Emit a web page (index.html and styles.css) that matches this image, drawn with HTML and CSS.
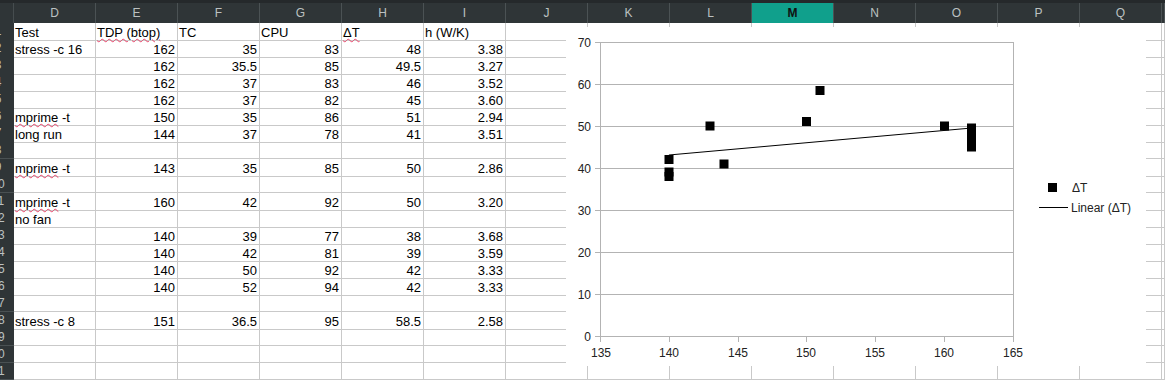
FILE: index.html
```html
<!DOCTYPE html>
<html>
<head>
<meta charset="utf-8">
<link rel="stylesheet" href="styles.css">
</head>
<body>
<div class="sheet">
  <div class="row hdr">
    <div class="corner"></div>
    <div class="h">D</div><div class="h">E</div><div class="h">F</div><div class="h">G</div><div class="h">H</div><div class="h">I</div><div class="h">J</div><div class="h">K</div><div class="h">L</div><div class="h sel">M</div><div class="h">N</div><div class="h">O</div><div class="h">P</div><div class="h">Q</div><div class="h"></div>
  </div>
  <div class="row"><div class="rh"><span>1</span></div><div class="c">Test</div><div class="c"><span class="sp">TDP (btop)</span></div><div class="c">TC</div><div class="c">CPU</div><div class="c"><span class="sp">ΔT</span></div><div class="c">h (W/K)</div><div class="c"></div><div class="c"></div><div class="c"></div><div class="c"></div><div class="c"></div><div class="c"></div><div class="c"></div><div class="c"></div><div class="c"></div></div>
  <div class="row"><div class="rh"><span>2</span></div><div class="c">stress -c 16</div><div class="c n">162</div><div class="c n">35</div><div class="c n">83</div><div class="c n">48</div><div class="c n">3.38</div><div class="c"></div><div class="c"></div><div class="c"></div><div class="c"></div><div class="c"></div><div class="c"></div><div class="c"></div><div class="c"></div><div class="c"></div></div>
  <div class="row"><div class="rh"><span>3</span></div><div class="c"></div><div class="c n">162</div><div class="c n">35.5</div><div class="c n">85</div><div class="c n">49.5</div><div class="c n">3.27</div><div class="c"></div><div class="c"></div><div class="c"></div><div class="c"></div><div class="c"></div><div class="c"></div><div class="c"></div><div class="c"></div><div class="c"></div></div>
  <div class="row"><div class="rh"><span>4</span></div><div class="c"></div><div class="c n">162</div><div class="c n">37</div><div class="c n">83</div><div class="c n">46</div><div class="c n">3.52</div><div class="c"></div><div class="c"></div><div class="c"></div><div class="c"></div><div class="c"></div><div class="c"></div><div class="c"></div><div class="c"></div><div class="c"></div></div>
  <div class="row"><div class="rh"><span>5</span></div><div class="c"></div><div class="c n">162</div><div class="c n">37</div><div class="c n">82</div><div class="c n">45</div><div class="c n">3.60</div><div class="c"></div><div class="c"></div><div class="c"></div><div class="c"></div><div class="c"></div><div class="c"></div><div class="c"></div><div class="c"></div><div class="c"></div></div>
  <div class="row"><div class="rh"><span>6</span></div><div class="c"><span class="sp">mprime</span> -t</div><div class="c n">150</div><div class="c n">35</div><div class="c n">86</div><div class="c n">51</div><div class="c n">2.94</div><div class="c"></div><div class="c"></div><div class="c"></div><div class="c"></div><div class="c"></div><div class="c"></div><div class="c"></div><div class="c"></div><div class="c"></div></div>
  <div class="row"><div class="rh"><span>7</span></div><div class="c">long run</div><div class="c n">144</div><div class="c n">37</div><div class="c n">78</div><div class="c n">41</div><div class="c n">3.51</div><div class="c"></div><div class="c"></div><div class="c"></div><div class="c"></div><div class="c"></div><div class="c"></div><div class="c"></div><div class="c"></div><div class="c"></div></div>
  <div class="row"><div class="rh"><span>8</span></div><div class="c"></div><div class="c"></div><div class="c"></div><div class="c"></div><div class="c"></div><div class="c"></div><div class="c"></div><div class="c"></div><div class="c"></div><div class="c"></div><div class="c"></div><div class="c"></div><div class="c"></div><div class="c"></div><div class="c"></div></div>
  <div class="row"><div class="rh"><span>9</span></div><div class="c"><span class="sp">mprime</span> -t</div><div class="c n">143</div><div class="c n">35</div><div class="c n">85</div><div class="c n">50</div><div class="c n">2.86</div><div class="c"></div><div class="c"></div><div class="c"></div><div class="c"></div><div class="c"></div><div class="c"></div><div class="c"></div><div class="c"></div><div class="c"></div></div>
  <div class="row"><div class="rh"><span>10</span></div><div class="c"></div><div class="c"></div><div class="c"></div><div class="c"></div><div class="c"></div><div class="c"></div><div class="c"></div><div class="c"></div><div class="c"></div><div class="c"></div><div class="c"></div><div class="c"></div><div class="c"></div><div class="c"></div><div class="c"></div></div>
  <div class="row"><div class="rh"><span>11</span></div><div class="c"><span class="sp">mprime</span> -t</div><div class="c n">160</div><div class="c n">42</div><div class="c n">92</div><div class="c n">50</div><div class="c n">3.20</div><div class="c"></div><div class="c"></div><div class="c"></div><div class="c"></div><div class="c"></div><div class="c"></div><div class="c"></div><div class="c"></div><div class="c"></div></div>
  <div class="row"><div class="rh"><span>12</span></div><div class="c">no fan</div><div class="c"></div><div class="c"></div><div class="c"></div><div class="c"></div><div class="c"></div><div class="c"></div><div class="c"></div><div class="c"></div><div class="c"></div><div class="c"></div><div class="c"></div><div class="c"></div><div class="c"></div><div class="c"></div></div>
  <div class="row"><div class="rh"><span>13</span></div><div class="c"></div><div class="c n">140</div><div class="c n">39</div><div class="c n">77</div><div class="c n">38</div><div class="c n">3.68</div><div class="c"></div><div class="c"></div><div class="c"></div><div class="c"></div><div class="c"></div><div class="c"></div><div class="c"></div><div class="c"></div><div class="c"></div></div>
  <div class="row"><div class="rh"><span>14</span></div><div class="c"></div><div class="c n">140</div><div class="c n">42</div><div class="c n">81</div><div class="c n">39</div><div class="c n">3.59</div><div class="c"></div><div class="c"></div><div class="c"></div><div class="c"></div><div class="c"></div><div class="c"></div><div class="c"></div><div class="c"></div><div class="c"></div></div>
  <div class="row"><div class="rh"><span>15</span></div><div class="c"></div><div class="c n">140</div><div class="c n">50</div><div class="c n">92</div><div class="c n">42</div><div class="c n">3.33</div><div class="c"></div><div class="c"></div><div class="c"></div><div class="c"></div><div class="c"></div><div class="c"></div><div class="c"></div><div class="c"></div><div class="c"></div></div>
  <div class="row"><div class="rh"><span>16</span></div><div class="c"></div><div class="c n">140</div><div class="c n">52</div><div class="c n">94</div><div class="c n">42</div><div class="c n">3.33</div><div class="c"></div><div class="c"></div><div class="c"></div><div class="c"></div><div class="c"></div><div class="c"></div><div class="c"></div><div class="c"></div><div class="c"></div></div>
  <div class="row"><div class="rh"><span>17</span></div><div class="c"></div><div class="c"></div><div class="c"></div><div class="c"></div><div class="c"></div><div class="c"></div><div class="c"></div><div class="c"></div><div class="c"></div><div class="c"></div><div class="c"></div><div class="c"></div><div class="c"></div><div class="c"></div><div class="c"></div></div>
  <div class="row"><div class="rh"><span>18</span></div><div class="c">stress -c 8</div><div class="c n">151</div><div class="c n">36.5</div><div class="c n">95</div><div class="c n">58.5</div><div class="c n">2.58</div><div class="c"></div><div class="c"></div><div class="c"></div><div class="c"></div><div class="c"></div><div class="c"></div><div class="c"></div><div class="c"></div><div class="c"></div></div>
  <div class="row"><div class="rh"><span>19</span></div><div class="c"></div><div class="c"></div><div class="c"></div><div class="c"></div><div class="c"></div><div class="c"></div><div class="c"></div><div class="c"></div><div class="c"></div><div class="c"></div><div class="c"></div><div class="c"></div><div class="c"></div><div class="c"></div><div class="c"></div></div>
  <div class="row"><div class="rh"><span>20</span></div><div class="c"></div><div class="c"></div><div class="c"></div><div class="c"></div><div class="c"></div><div class="c"></div><div class="c"></div><div class="c"></div><div class="c"></div><div class="c"></div><div class="c"></div><div class="c"></div><div class="c"></div><div class="c"></div><div class="c"></div></div>
  <div class="row"><div class="rh"><span>21</span></div><div class="c"></div><div class="c"></div><div class="c"></div><div class="c"></div><div class="c"></div><div class="c"></div><div class="c"></div><div class="c"></div><div class="c"></div><div class="c"></div><div class="c"></div><div class="c"></div><div class="c"></div><div class="c"></div><div class="c"></div></div>

  <div class="chart">
    <svg width="580" height="339" viewBox="0 0 580 339">
      <g transform="translate(-566 -27)">
        <g class="grid">
          <line x1="600" y1="42.5" x2="1013" y2="42.5"/>
          <line x1="600" y1="84.5" x2="1013" y2="84.5"/>
          <line x1="600" y1="126.5" x2="1013" y2="126.5"/>
          <line x1="600" y1="168.5" x2="1013" y2="168.5"/>
          <line x1="600" y1="210.5" x2="1013" y2="210.5"/>
          <line x1="600" y1="252.5" x2="1013" y2="252.5"/>
          <line x1="600" y1="294.5" x2="1013" y2="294.5"/>
          <line x1="595" y1="336.5" x2="1013.5" y2="336.5"/>
          <line x1="1013.5" y1="42" x2="1013.5" y2="342"/>
          <line x1="600.5" y1="42" x2="600.5" y2="342"/>
          <line x1="595" y1="42.5" x2="600" y2="42.5"/>
          <line x1="595" y1="84.5" x2="600" y2="84.5"/>
          <line x1="595" y1="126.5" x2="600" y2="126.5"/>
          <line x1="595" y1="168.5" x2="600" y2="168.5"/>
          <line x1="595" y1="210.5" x2="600" y2="210.5"/>
          <line x1="595" y1="252.5" x2="600" y2="252.5"/>
          <line x1="595" y1="294.5" x2="600" y2="294.5"/>
          <line x1="669.5" y1="336" x2="669.5" y2="342"/>
          <line x1="738.5" y1="336" x2="738.5" y2="342"/>
          <line x1="806.5" y1="336" x2="806.5" y2="342"/>
          <line x1="875.5" y1="336" x2="875.5" y2="342"/>
          <line x1="944.5" y1="336" x2="944.5" y2="342"/>
        </g>
        <g class="lbl ylbl">
          <text x="591" y="47">70</text>
          <text x="591" y="89">60</text>
          <text x="591" y="131">50</text>
          <text x="591" y="173">40</text>
          <text x="591" y="215">30</text>
          <text x="591" y="257">20</text>
          <text x="591" y="299">10</text>
          <text x="591" y="341">0</text>
        </g>
        <g class="lbl xlbl">
          <text x="601" y="357">135</text>
          <text x="669" y="357">140</text>
          <text x="738" y="357">145</text>
          <text x="806" y="357">150</text>
          <text x="875" y="357">155</text>
          <text x="944" y="357">160</text>
          <text x="1013" y="357">165</text>
        </g>
        <line class="trend" x1="668.9" y1="155" x2="971.8" y2="128"/>
        <g class="pts">
          <rect x="967" y="130" width="9" height="9"/>
          <rect x="967" y="123.5" width="9" height="9"/>
          <rect x="967" y="138.5" width="9" height="9"/>
          <rect x="967" y="142.5" width="9" height="9"/>
          <rect x="802" y="117" width="9" height="9"/>
          <rect x="719.5" y="159.5" width="9" height="9"/>
          <rect x="705.5" y="121.5" width="9" height="9"/>
          <rect x="940" y="121.5" width="9" height="9"/>
          <rect x="664.5" y="172" width="9" height="9"/>
          <rect x="664.5" y="167.5" width="9" height="9"/>
          <rect x="664.5" y="155" width="9" height="9"/>
          <rect x="815.5" y="86" width="9" height="9"/>
        </g>
        <rect class="pt" x="1048" y="183" width="9" height="9"/>
        <text class="lbl" x="1072" y="192">ΔT</text>
        <line class="trend" x1="1039" y1="207.5" x2="1068" y2="207.5"/>
        <text class="lbl" x="1071" y="212">Linear (ΔT)</text>
      </g>
    </svg>
  </div>
</div>
</body>
</html>
```
FILE: styles.css
```css
html, body {
  margin: 0;
  padding: 0;
  background: #ffffff;
}

body {
  font-family: "Liberation Sans", Arial, sans-serif;
  overflow: hidden;
}

.sheet {
  position: relative;
  width: 1165px;
  height: 381px;
  overflow: hidden;
}

.row {
  display: grid;
  grid-template-columns: 14px repeat(14, 82px) 1fr;
  height: 17px;
}

.hdr {
  height: 23px;
  background: #2f3537;
  border-top: 3px solid #25292b;
  box-sizing: border-box;
}

.corner {
  background: #2f3537;
  border-right: 1px solid #464d4f;
}

.h {
  border-right: 1px solid #4b5254;
  color: #bcc1c1;
  font-size: 12px;
  line-height: 20px;
  text-align: center;
}

.h.sel {
  background: #10a08c;
  color: #111111;
  font-weight: bold;
}

.rh {
  background: #2f3537;
  border-bottom: 1px solid #4a5153;
  color: #bcc1c1;
  font-size: 12px;
  overflow: hidden;
  box-sizing: border-box;
}

.rh span {
  display: block;
  width: 28px;
  margin-left: -16px;
  text-align: center;
  line-height: 17px;
}

.c {
  border-right: 1px solid #c9c9c9;
  border-bottom: 1px solid #c9c9c9;
  box-sizing: border-box;
  padding: 2px 1px 0 1px;
  font-size: 13px;
  line-height: 15px;
  white-space: nowrap;
  color: #000000;
}

.c.n {
  text-align: right;
  padding-right: 2px;
}

.sp {
  text-decoration-line: underline;
  text-decoration-style: wavy;
  text-decoration-color: #e8456b;
  text-decoration-thickness: 1px;
  text-underline-offset: 1px;
}

.chart {
  position: absolute;
  left: 566px;
  top: 27px;
  width: 580px;
  height: 339px;
  background: #ffffff;
}

.chart svg {
  display: block;
}

.grid line {
  stroke: #b3b3b3;
  stroke-width: 1;
}

.lbl {
  font-family: "Liberation Sans", Arial, sans-serif;
  font-size: 12px;
  fill: #222222;
}

.ylbl text {
  text-anchor: end;
}

.xlbl text {
  text-anchor: middle;
}

.trend {
  stroke: #000000;
  stroke-width: 1;
}

.pts rect,
.pt {
  fill: #000000;
}
```
